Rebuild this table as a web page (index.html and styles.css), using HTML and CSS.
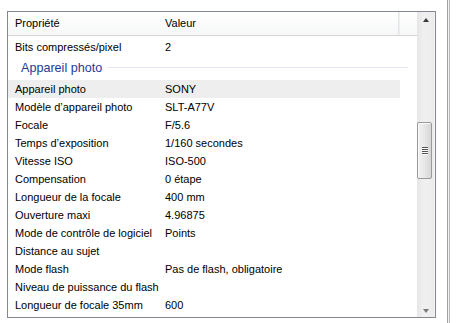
FILE: index.html
```html
<!DOCTYPE html>
<html lang="fr">
<head>
<meta charset="utf-8">
<title>Propriétés</title>
<link rel="stylesheet" href="styles.css">
</head>
<body>
<div class="page">
  <div class="listbox">
    <div class="list">
      <div class="header">
        <div class="hcell col1">Propriété</div>
        <div class="hcell col2">Valeur</div>
        <div class="hend"></div>
      </div>
      <div class="rows">
        <div class="row first"><span class="col1">Bits compressés/pixel</span><span class="col2">2</span></div>
        <div class="group"><span class="group-title">Appareil photo</span><span class="group-line"></span></div>
        <div class="row hover"><span class="col1">Appareil photo</span><span class="col2">SONY</span></div>
        <div class="row"><span class="col1">Modèle d’appareil photo</span><span class="col2">SLT-A77V</span></div>
        <div class="row"><span class="col1">Focale</span><span class="col2">F/5.6</span></div>
        <div class="row"><span class="col1">Temps d’exposition</span><span class="col2">1/160 secondes</span></div>
        <div class="row"><span class="col1">Vitesse ISO</span><span class="col2">ISO-500</span></div>
        <div class="row"><span class="col1">Compensation</span><span class="col2">0 étape</span></div>
        <div class="row"><span class="col1">Longueur de la focale</span><span class="col2">400 mm</span></div>
        <div class="row"><span class="col1">Ouverture maxi</span><span class="col2">4.96875</span></div>
        <div class="row"><span class="col1">Mode de contrôle de logiciel</span><span class="col2">Points</span></div>
        <div class="row"><span class="col1">Distance au sujet</span><span class="col2"></span></div>
        <div class="row"><span class="col1">Mode flash</span><span class="col2">Pas de flash, obligatoire</span></div>
        <div class="row"><span class="col1">Niveau de puissance du flash</span><span class="col2"></span></div>
        <div class="row"><span class="col1">Longueur de focale 35mm</span><span class="col2">600</span></div>
      </div>
    </div>
    <div class="scrollbar">
      <div class="arrow up"></div>
      <div class="track">
        <div class="thumb"><span class="grip"></span><span class="grip"></span><span class="grip"></span><span class="grip"></span></div>
      </div>
      <div class="arrow down"></div>
    </div>
  </div>
  <div class="panel-edge"></div>
</div>
</body>
</html>
```

FILE: styles.css
```css
html, body {
  margin: 0;
  padding: 0;
  background: #ffffff;
}

body {
  font-family: "Liberation Sans", Arial, sans-serif;
  font-size: 11px;
  color: #000;
  width: 456px;
  height: 323px;
  overflow: hidden;
}

.page {
  display: flex;
  align-items: flex-start;
  height: 323px;
}

.listbox {
  margin: 11px 0 0 7px;
  width: 427px;
  height: 305px;
  border: 1px solid #828790;
  display: flex;
  overflow: hidden;
  background: #fff;
}

.list {
  width: 410px;
  display: flex;
  flex-direction: column;
  overflow: hidden;
}

.header {
  height: 23px;
  display: flex;
  align-items: center;
  border-bottom: 1px solid #d5d5d5;
  background: linear-gradient(#ffffff, #f6f7f8);
}

.hcell {
  height: 23px;
  line-height: 23px;
}

.col1 {
  width: 150px;
  padding-left: 7px;
  flex: none;
  white-space: nowrap;
}

.col2 {
  width: 235px;
  flex: none;
  white-space: nowrap;
}

.header .col2 {
  width: 233px;
  border-right: 1px solid #e3e4e6;
}

.hend {
  width: 1px;
  height: 23px;
  background: #eef0f2;
}

.rows {
  display: flex;
  flex-direction: column;
  padding-top: 2px;
}

.row {
  display: flex;
  height: 18px;
  line-height: 18px;
  width: 392px;
}

.row.hover {
  background: #eeeeee;
}

.group {
  height: 24px;
  display: flex;
  align-items: center;
  padding-left: 13px;
  width: 387px;
  gap: 6px;
}

.group-title {
  font-size: 12.6px;
  color: #1e3a9a;
  white-space: nowrap;
}

.group-line {
  flex: 1;
  height: 1px;
  background: #e2e6ee;
  margin-top: -1px;
}

.scrollbar {
  width: 17px;
  display: flex;
  flex-direction: column;
  background: linear-gradient(90deg, #e6e6e6, #f0f0f0 40%, #ececec);
  border-right: 1px solid #f4f4f4;
  margin-left: auto;
}

.arrow {
  height: 17px;
  display: flex;
  align-items: center;
  justify-content: center;
}

.arrow::before {
  content: "";
  width: 0;
  height: 0;
  border-left: 3.5px solid transparent;
  border-right: 3.5px solid transparent;
}

.arrow.up::before {
  border-bottom: 4px solid #3a3a3a;
  margin-top: -2px;
}

.arrow.down::before {
  border-top: 4px solid #7a7a7a;
  margin-top: 4px;
}

.track {
  flex: 1;
  padding-top: 93px;
}

.thumb {
  margin-left: 0;
  width: 13px;
  height: 55px;
  border: 1px solid #9a9a9a;
  border-radius: 2px;
  background: linear-gradient(90deg, #f2f2f2, #e7e7e7 50%, #d6d6d6);
  box-shadow: inset 1px 1px 0 #fafafa;
  display: flex;
  flex-direction: column;
  align-items: center;
  justify-content: center;
  gap: 1px;
}

.grip {
  width: 6px;
  height: 1px;
  background: #555;
  box-shadow: 0 1px 0 #fafafa;
}

.panel-edge {
  margin-left: 11px;
  width: 1px;
  height: 323px;
  border-left: 1px solid #a0a0a0;
  border-right: 1px solid #b8b8b8;
  background: #f4f4f4;
}
```
